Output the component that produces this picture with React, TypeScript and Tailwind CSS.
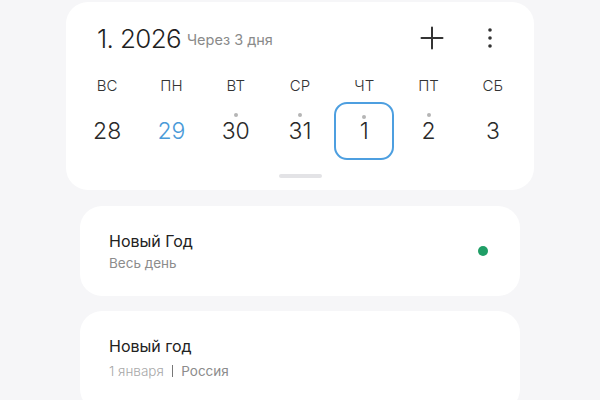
const days = [
  { wd: "ВС", n: "28", dot: false },
  { wd: "ПН", n: "29", dot: false, today: true },
  { wd: "ВТ", n: "30", dot: true },
  { wd: "СР", n: "31", dot: true },
  { wd: "ЧТ", n: "1", dot: true, selected: true },
  { wd: "ПТ", n: "2", dot: true },
  { wd: "СБ", n: "3", dot: false },
]

const font = { fontFamily: "Inter, 'Noto Sans', sans-serif" }

export default function App() {
  return (
    <div className="w-[600px] h-[400px] overflow-hidden bg-[#f6f6f8]" style={font}>
      {/* week card */}
      <div className="mx-[66px] mt-[2px] h-[188px] bg-white rounded-[22px] flex flex-col">
        <div className="h-[72px] flex items-center pl-[31px] pr-[41px]">
          <span className="text-[26px] font-light text-[#1f1f1f] tracking-tight">1. 2026</span>
          <span className="ml-[6px] mt-[4px] text-[14.5px] text-[#8a8a8a]">Через 3 дня</span>
          <div className="ml-auto flex items-center">
            <svg width="24" height="24" viewBox="0 0 24 24" className="mr-[43px]">
              <path d="M12 1.5v21M1.5 12h21" stroke="#333" strokeWidth="2" strokeLinecap="round" />
            </svg>
            <svg width="6" height="22" viewBox="0 0 6 22">
              <circle cx="3" cy="3" r="1.8" fill="#333" />
              <circle cx="3" cy="11" r="1.8" fill="#333" />
              <circle cx="3" cy="19" r="1.8" fill="#333" />
            </svg>
          </div>
        </div>
        <div className="px-[9px] grid grid-cols-7">
          {days.map((d) => (
            <div key={d.wd} className="h-[24px] flex items-center justify-center text-[15px] text-[#333] font-light">
              {d.wd}
            </div>
          ))}
        </div>
        <div className="px-[9px] mt-[4px] grid grid-cols-7">
          {days.map((d) => (
            <div key={d.n} className="flex justify-center">
              <div
                className={`relative w-[60px] h-[58px] rounded-[13px] flex items-center justify-center ${
                  d.selected ? "border-2 border-[#4d9fe0]" : ""
                }`}
              >
                {d.dot && (
                  <span className="absolute top-[11px] left-1/2 -ml-[2px] w-[4px] h-[4px] rounded-full bg-[#b5b5b5]" />
                )}
                <span
                  className={`mt-[1px] text-[23px] font-light ${d.today ? "text-[#4a9ad8]" : "text-[#2a2a2a]"}`}
                >
                  {d.n}
                </span>
              </div>
            </div>
          ))}
        </div>
        <div className="mt-[14px] flex justify-center">
          <div className="w-[43px] h-[4px] rounded-full bg-[#e3e3e6]" />
        </div>
      </div>

      {/* events */}
      <div className="mx-[80px] mt-[16px] h-[90px] bg-white rounded-[22px] flex items-center pl-[29px] pr-[32px]">
        <div className="flex flex-col">
          <span className="text-[16px] text-[#222] leading-[22px]">Новый Год</span>
          <span className="mt-[1px] text-[13.5px] text-[#8c8c8c] leading-[20px]">Весь день</span>
        </div>
        <span className="ml-auto w-[10px] h-[10px] rounded-full bg-[#1f9e66]" />
      </div>

      <div className="mx-[80px] mt-[15px] h-[100px] bg-white rounded-[22px] flex pt-[24px] pl-[29px]">
        <div className="flex flex-col">
          <span className="text-[16px] text-[#222] leading-[22px]">Новый год</span>
          <span className="mt-[4px] text-[13.5px] leading-[20px] flex items-center">
            <span className="text-[#a8a8a8] font-light">1 января</span>
            <span className="mx-[8px] w-[1.5px] h-[12px] bg-[#777]" />
            <span className="text-[#8c8c8c]">Россия</span>
          </span>
        </div>
      </div>
    </div>
  )
}
